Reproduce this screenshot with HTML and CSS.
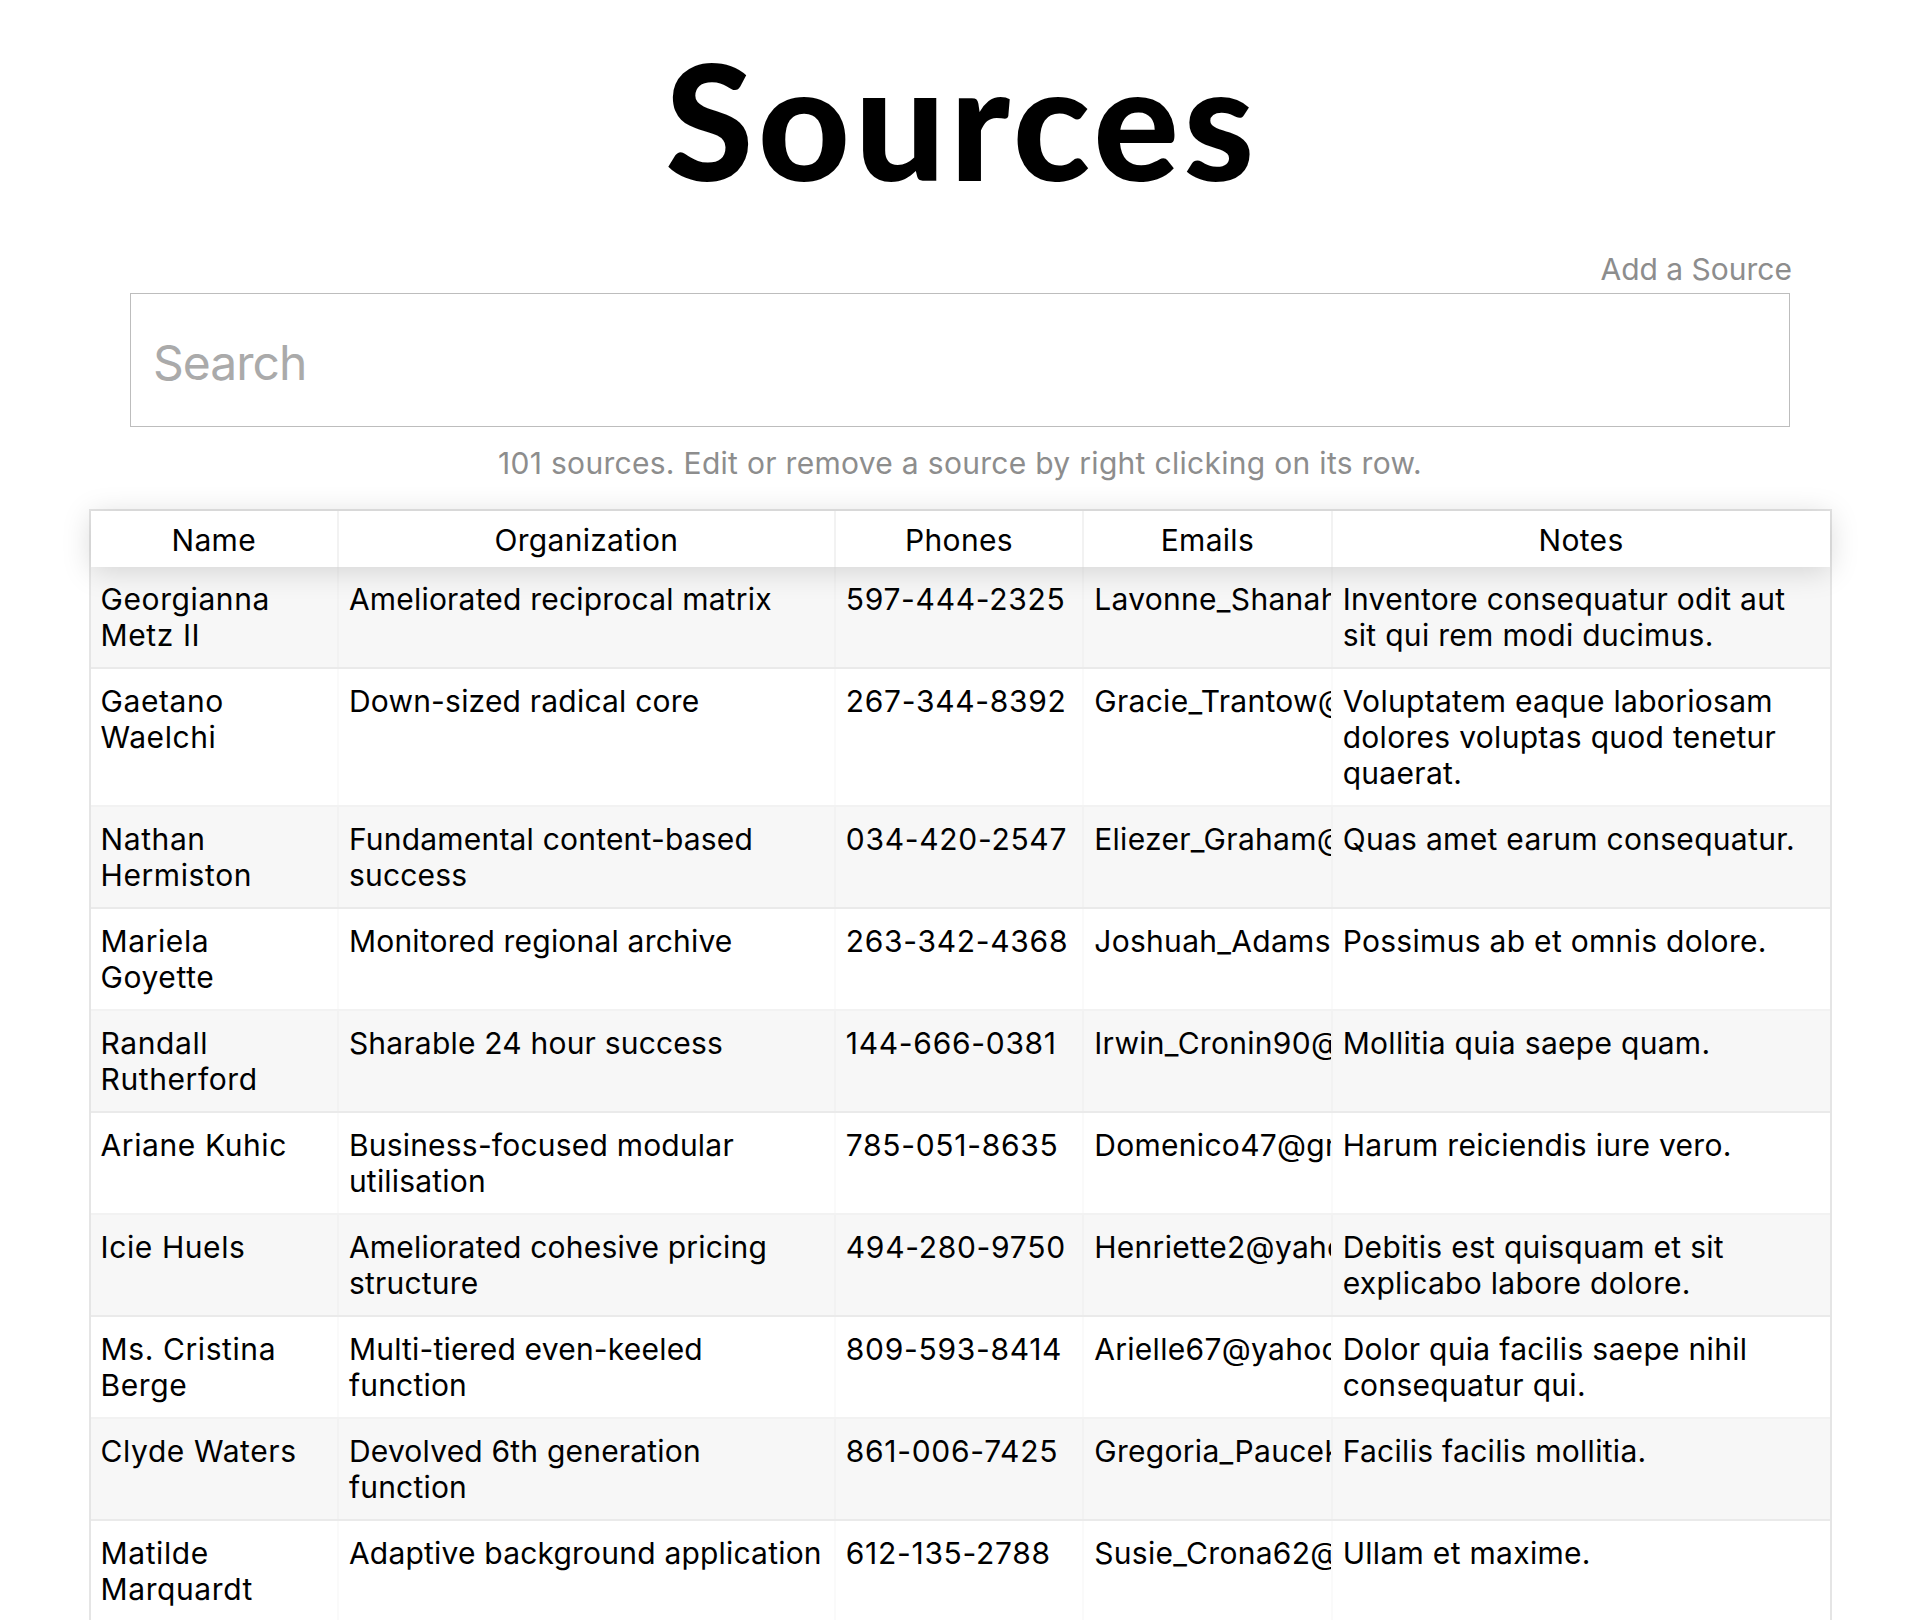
FILE: index.html
```html
<!DOCTYPE html>
<html lang="en">
<head>
<meta charset="utf-8">
<title>Sources</title>
<link rel="stylesheet" href="styles.css">
</head>
<body>
<main class="page">
  <h1 class="title">Sources</h1>
  <section class="search-area">
    <div class="actions"><a class="add-link" href="#">Add a Source</a></div>
    <input class="search" type="text" placeholder="Search">
  </section>
  <p class="caption">101 sources. Edit or remove a source by right clicking on its row.</p>
  <div class="table">
    <div class="thead">
      <div class="th">Name</div>
      <div class="th">Organization</div>
      <div class="th">Phones</div>
      <div class="th">Emails</div>
      <div class="th">Notes</div>
    </div>
    <div class="tbody">
      <div class="tr odd">
        <div class="td">Georgianna Metz II</div>
        <div class="td">Ameliorated reciprocal matrix</div>
        <div class="td">597-444-2325</div>
        <div class="td">Lavonne_Shanahan@hotmail.com</div>
        <div class="td">Inventore consequatur odit aut sit qui rem modi ducimus.</div>
      </div>
      <div class="tr">
        <div class="td">Gaetano Waelchi</div>
        <div class="td">Down-sized radical core</div>
        <div class="td">267-344-8392</div>
        <div class="td">Gracie_Trantow@yahoo.com</div>
        <div class="td">Voluptatem eaque laboriosam dolores voluptas quod tenetur quaerat.</div>
      </div>
      <div class="tr odd">
        <div class="td">Nathan Hermiston</div>
        <div class="td">Fundamental content-based success</div>
        <div class="td">034-420-2547</div>
        <div class="td">Eliezer_Graham@gmail.com</div>
        <div class="td">Quas amet earum consequatur.</div>
      </div>
      <div class="tr">
        <div class="td">Mariela Goyette</div>
        <div class="td">Monitored regional archive</div>
        <div class="td">263-342-4368</div>
        <div class="td">Joshuah_Adams84@hotmail.com</div>
        <div class="td">Possimus ab et omnis dolore.</div>
      </div>
      <div class="tr odd">
        <div class="td">Randall Rutherford</div>
        <div class="td">Sharable 24 hour success</div>
        <div class="td">144-666-0381</div>
        <div class="td">Irwin_Cronin90@gmail.com</div>
        <div class="td">Mollitia quia saepe quam.</div>
      </div>
      <div class="tr">
        <div class="td">Ariane Kuhic</div>
        <div class="td">Business-focused modular utilisation</div>
        <div class="td">785-051-8635</div>
        <div class="td">Domenico47@gmail.com</div>
        <div class="td">Harum reiciendis iure vero.</div>
      </div>
      <div class="tr odd">
        <div class="td">Icie Huels</div>
        <div class="td">Ameliorated cohesive pricing structure</div>
        <div class="td">494-280-9750</div>
        <div class="td">Henriette2@yahoo.com</div>
        <div class="td">Debitis est quisquam et sit explicabo labore dolore.</div>
      </div>
      <div class="tr">
        <div class="td">Ms. Cristina Berge</div>
        <div class="td">Multi-tiered even-keeled function</div>
        <div class="td">809-593-8414</div>
        <div class="td">Arielle67@yahoo.com</div>
        <div class="td">Dolor quia facilis saepe nihil consequatur qui.</div>
      </div>
      <div class="tr odd">
        <div class="td">Clyde Waters</div>
        <div class="td">Devolved 6th generation function</div>
        <div class="td">861-006-7425</div>
        <div class="td">Gregoria_Paucek@hotmail.com</div>
        <div class="td">Facilis facilis mollitia.</div>
      </div>
      <div class="tr">
        <div class="td">Matilde Marquardt</div>
        <div class="td">Adaptive background application</div>
        <div class="td">612-135-2788</div>
        <div class="td">Susie_Crona62@gmail.com</div>
        <div class="td">Ullam et maxime.</div>
      </div>
    </div>
  </div>
</main>
</body>
</html>
```

FILE: styles.css
```css
html, body {
  margin: 0;
  padding: 0;
  overflow: hidden;
  background: #fff;
}

body {
  font-family: Inter, "Liberation Sans", Arial, sans-serif;
  color: #000;
  letter-spacing: 0.3px;
}

.page {
  width: 1920px;
}

.title {
  margin: 39px 0 0;
  padding-left: 4px;
  font-family: Lato, "Liberation Sans", sans-serif;
  font-weight: 900;
  font-size: 160px;
  line-height: 160px;
  letter-spacing: 4.5px;
  text-align: center;
  color: #000;
}

.search-area {
  width: 1660px;
  margin: 52px auto 0;
}

.actions {
  display: flex;
  justify-content: flex-end;
  margin-bottom: 6px;
}

.add-link {
  font-size: 30px;
  line-height: 36px;
  letter-spacing: 0;
  color: #8d8d8d;
  text-decoration: none;
  margin-right: -2px;
}

.search {
  display: block;
  box-sizing: border-box;
  width: 1660px;
  height: 134px;
  margin: 0;
  padding: 5px 22px 0;
  border: 1px solid #bdbdbd;
  border-radius: 0;
  outline: none;
  font-family: Inter, "Liberation Sans", sans-serif;
  font-size: 48px;
  letter-spacing: -1px;
  color: #000;
  background: #fff;
}

.search::placeholder {
  color: #aaaaaa;
}

.caption {
  margin: 18px 0 0;
  font-size: 30px;
  line-height: 36px;
  text-align: center;
  color: #8d8d8d;
}

.table {
  width: 1743px;
  margin: 28px auto 0;
  box-sizing: border-box;
  border: 2px solid rgba(0, 0, 0, 0.1);
  font-size: 30px;
  line-height: 36px;
}

.thead,
.tr {
  display: grid;
  grid-template-columns: 1fr 2fr 1fr 1fr 2fr;
}

.thead {
  position: relative;
  z-index: 1;
  background: #fff;
  box-shadow: 0 4px 30px 0 rgba(0, 0, 0, 0.15);
}

.th {
  padding: 11px 10px 9px;
  text-align: center;
  border-right: 2px solid rgba(0, 0, 0, 0.05);
  overflow: hidden;
  min-width: 0;
}

.th:last-child,
.td:last-child {
  border-right: 0;
}

.tr {
  border-bottom: 2px solid rgba(0, 0, 0, 0.05);
  background: #fff;
}

.tr.odd {
  background: #f7f7f7;
}

.td {
  padding: 14px 10px;
  border-right: 2px solid rgba(0, 0, 0, 0.02);
  overflow: hidden;
  min-width: 0;
}

.td:nth-child(1) {
  letter-spacing: 0.6px;
}

.td:nth-child(2) {
  letter-spacing: 0.2px;
}

.td:nth-child(3) {
  letter-spacing: 0.7px;
}
```
